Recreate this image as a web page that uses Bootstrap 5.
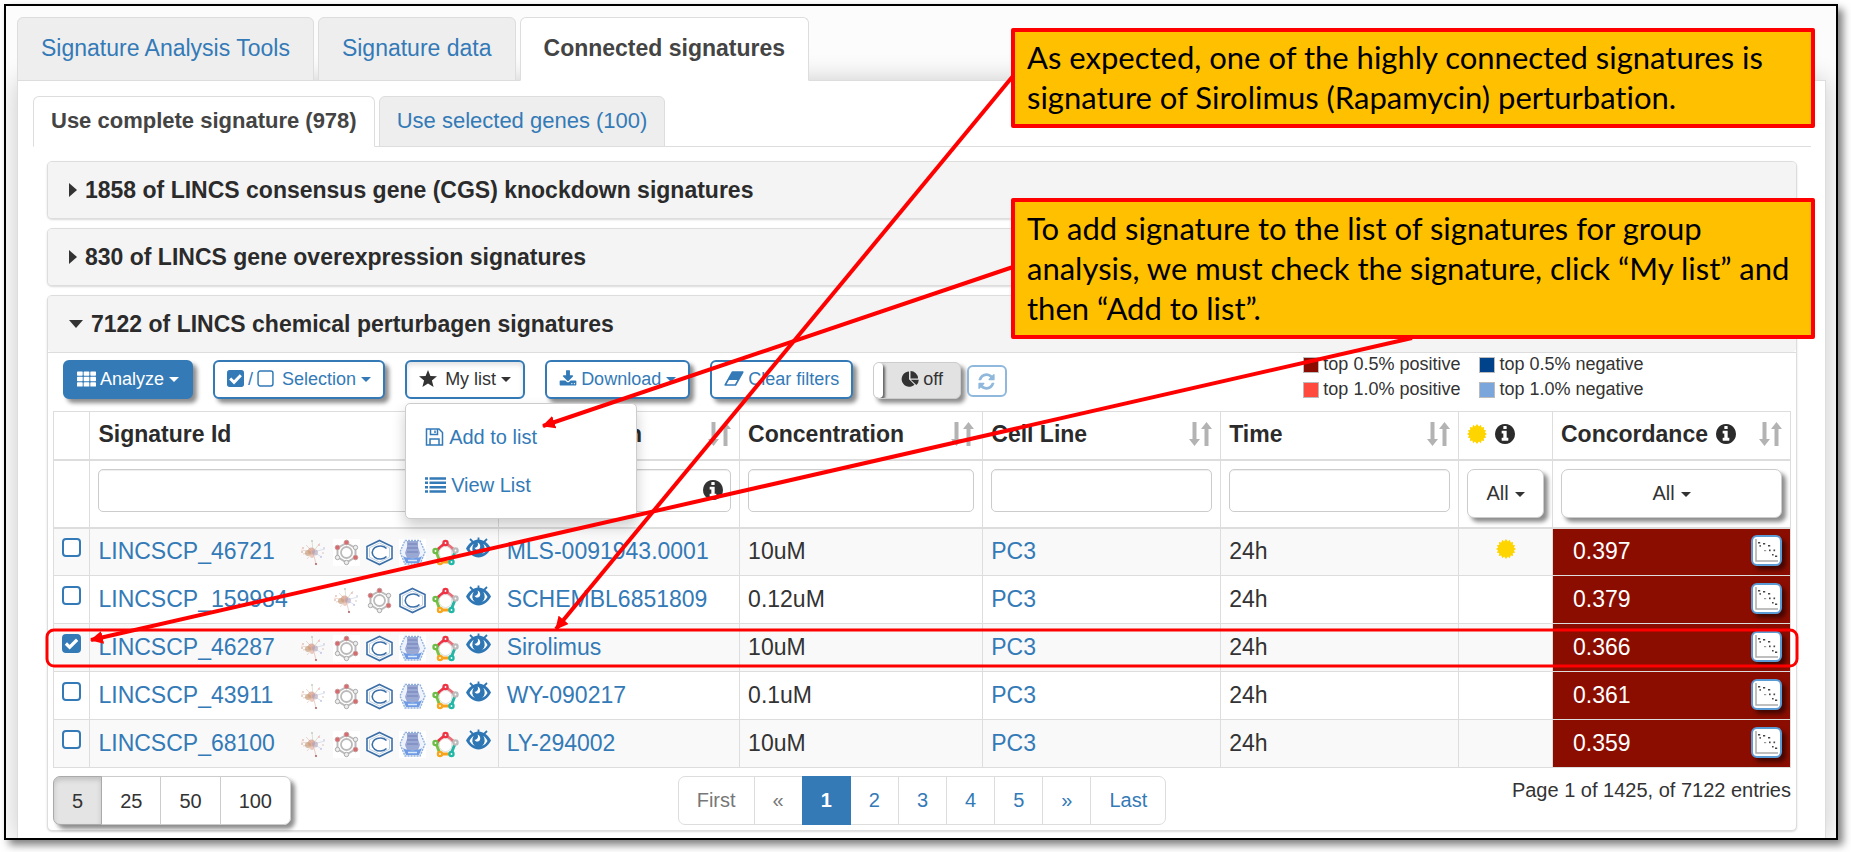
<!DOCTYPE html>
<html lang="en">
<head>
<meta charset="utf-8">
<meta name="viewport" content="width=device-width, initial-scale=1">
<title>Connected signatures</title>
<link href="https://cdn.jsdelivr.net/npm/bootstrap@5.3.0/dist/css/bootstrap.min.css" rel="stylesheet">
<style>
  :root { --blue: #337ab7; --line: #ddd; }
  body { font-family: "Liberation Sans", Arial, sans-serif; font-size: 23px; line-height: 32px; color: #333; background: #fff; }
  a { color: var(--blue); text-decoration: none; }
  .slide-wrap { padding: 4px 13px 13px 4px; }
  .slide { border: 2px solid #000; box-shadow: 5px 5px 8px rgba(0,0,0,.5); background: #fcfcfc; padding: 11px 10px 0 11px; overflow: hidden; }
  .nav-tabs { border: 0; gap: 4px; }
  .nav-tabs .nav-link { position: relative; z-index: 2; margin: 0; border: 1px solid var(--line); border-radius: 6px 6px 0 0; background: #eee; color: var(--blue); }
  .nav-tabs .nav-link.active { background: #fff; color: #444; font-weight: bold; border-color: var(--line); border-bottom-color: #fff; }
  .tabs-main .nav-link { padding: 14px 23px 16px; }
  .tabs-main .nav-item { margin-bottom: -1px; }
  .tabs-sub { font-size: 22px; line-height: 32px; border-bottom: 1px solid var(--line); }
  .tabs-sub .nav-item { margin-bottom: -1px; }
  .tabs-sub .nav-link { padding: 8px 17px 9px; }
  .sheet { border: 1px solid var(--line); border-bottom: 0; background: #fff; box-shadow: 0 0 24px rgba(0,0,0,.2); padding: 15px 14px 7px 15px; }
  .groups { display: flex; flex-direction: column; gap: 9px; padding: 14px 14px 0; }
  .group-box { border: 1px solid var(--line); border-radius: 5px; background: #fff; box-shadow: 0 1px 2px rgba(0,0,0,.15); }
  .group-head { display: flex; align-items: center; width: 100%; gap: 8px; height: 56px; padding: 0 21px 1px; border: 0; border-radius: 4px; background: #f4f4f4; font-weight: bold; color: #2b2b2b; text-align: left; }
  .tri-r { border: 7px solid transparent; border-left: 8px solid #333; border-right: 0; }
  .tri-d { border: 7px solid transparent; border-top: 8px solid #333; border-bottom: 0; }
  .group-body { border-top: 1px solid var(--line); padding: 7px 5px 5px; }
  .tools { gap: 20px; padding: 0 10px 12px; align-items: flex-start; }
  .tools .btn { font-size: 18px; line-height: 24px; padding: 5px 12px 7px; border: 2px solid var(--blue); border-radius: 6px; color: var(--blue); background: #fff; display: flex; align-items: center; gap: 4px; height: 39px; }
  .tools .dropdown-toggle::after { margin: 2px 0 0 1px; }
  .lift { box-shadow: 4px 4px 4px rgba(0,0,0,.45); }
  .tools .btn.solid { background: var(--blue); color: #fff; }
  .tools .btn.opened { color: #333; box-shadow: inset 0 3px 5px rgba(0,0,0,.12); }
  .tools .toggle { border: 1px solid #ccc; background: #e2e2e2; color: #333; padding: 0 17px 4px 0; height: 37px; margin-top: 2px; overflow: hidden; }
  .toggle .knob { align-self: stretch; width: 9px; margin: 0 14px -4px 0; background: #fff; border-radius: 4px; box-shadow: 2px 2px 3px rgba(0,0,0,.6); }
  .tools .btn.refresh { padding: 0; width: 40px; height: 32px; margin: 5px 0 0 -14px; justify-content: center; border-color: #8fb8dc; color: #8fb8dc; }
  .dropdown-menu { width: 232px; margin: 4px 0 0; padding: 9px 0; border: 1px solid #ccc; border-radius: 5px; box-shadow: 0 7px 14px rgba(0,0,0,.2); }
  .dropdown-menu .dropdown-item { display: flex; align-items: center; gap: 5px; font-size: 20px; line-height: 32px; padding: 8px 19px; color: var(--blue); }
  .legend-key { display: grid; grid-template-columns: auto auto; column-gap: 19px; font-size: 18px; line-height: 25px; margin: -8px 8% 0 auto; height: 40px; }
  .legend-key span { display: flex; align-items: center; gap: 4px; }
  .legend-key i { width: 16px; height: 16px; border: 1px solid #bbb; }
  .k1 { background: #8b0b00; } .k2 { background: #00438a; } .k3 { background: #ff4a3d; } .k4 { background: #7ba6dc; }
  .sig-table { width: 100%; table-layout: fixed; border-collapse: collapse; margin: 0; line-height: 28px; }
  .sig-table th, .sig-table td { border: 1px solid var(--line); padding: 0 8px; height: 48px; vertical-align: middle; }
  .sig-table thead tr:first-child th { border-bottom-width: 2px; color: #2b2b2b; padding-bottom: 2px; }
  .sig-table thead tr:last-child td { height: 68px; border-bottom-width: 2px; vertical-align: top; padding-top: 8px; }
  .sig-table tbody td { padding-bottom: 2px; }
  .sig-table tbody tr:nth-child(odd) { background: #f9f9f9; }
  .c-check { width: 2.1%; } .c-id { width: 23.5%; } .c-name { width: 13.9%; } .c-conc { width: 14%; } .c-mid { width: 13.7%; } .c-sun { width: 5.4%; }
  .sig-table .form-control { height: 43px; border: 1px solid #ccc; border-radius: 5px; box-shadow: inset 0 1px 1px rgba(0,0,0,.07); font-size: 20px; }
  .btn-plain { background: #fff; border: 1px solid #ccc; border-radius: 7px; height: 49px; font-size: 20px; color: #333; padding: 0 12px; }
  .btn-plain.pick { width: 100%; display: flex; align-items: center; justify-content: center; }
  .pick::after { margin: 2px 0 0 6px; border-width: 5px; border-bottom-width: 0; }
  .tick { appearance: none; display: block; width: 19px; height: 19px; margin: 0 auto 7px; border: 2px solid var(--blue); border-radius: 4px; background: #fff center / 15px no-repeat; }
  .tick:checked { background-color: var(--blue); background-image: url("data:image/svg+xml,%3Csvg xmlns='http://www.w3.org/2000/svg' viewBox='0 0 16 16'%3E%3Cpath d='M2 8l4 4 8-8' fill='none' stroke='%23fff' stroke-width='3.4'/%3E%3C/svg%3E"); }
  .sig-table td.id-cell { padding-right: 6px; }
  .marks { display: flex; gap: 6px; padding-top: 3px; }
  .marks svg { width: 27px; height: 27px; }
  .marks .eye { margin-top: -4px; }
  .sig-table td.score { background: #8b0d00; color: #fff; padding-left: 20px; }
  .plot { width: 31px; height: 31px; padding: 0; border: 2px solid #5b9bd5; border-radius: 6px; background: #fff; box-shadow: 4px 4px 4px rgba(0,0,0,.5); display: flex; }
  .foot { display: grid; grid-template-columns: 1fr auto 1fr; font-size: 20px; line-height: 28px; padding-top: 8px; }
  .sizes .btn { padding: 0 18px; border-radius: 7px; }
  .sizes .btn.active { background: #e4e4e4; color: #333; border-color: #aaa; box-shadow: inset 0 3px 5px rgba(0,0,0,.15); }
  .pagination { margin: 0; --bs-pagination-font-size: 20px; }
  .page-link { height: 49px; line-height: 47px; padding: 0 18px; color: var(--blue); border-color: var(--line); font-size: 20px; }
  .page-item:first-child .page-link { border-radius: 7px 0 0 7px; } .page-item:last-child .page-link { border-radius: 0 7px 7px 0; }
  .page-item.active .page-link { background: var(--blue); border-color: var(--blue); }
  .page-item.disabled .page-link { color: #777; background: #fff; border-color: var(--line); }
  /* annotations lying over the page */
  .overlay { position: absolute; left: 0; top: 0; z-index: 1100; pointer-events: none; }
  .callout-note { position: absolute; left: 1011px; width: 804px; z-index: 1101; margin: 0; border: 4px solid #f00; border-radius: 2px; background: #ffc000; color: #000; font-family: Lato, "Open Sans", sans-serif; font-size: 31px; font-variant-ligatures: none; line-height: 40px; padding: 5px 0 7px 12px; white-space: nowrap; }
  .note-a { top: 28px; } .note-b { top: 198px; padding: 6px 0 7px 12px; }
</style>
</head>
<body>
<svg width="0" height="0" class="position-absolute" aria-hidden="true">
  <symbol id="grid9" viewBox="0 0 20 16"><g fill="currentColor"><rect width="6" height="4.6" rx=".7"/><rect x="7" width="6" height="4.6" rx=".7"/><rect x="14" width="6" height="4.6" rx=".7"/><rect y="5.7" width="6" height="4.6" rx=".7"/><rect x="7" y="5.7" width="6" height="4.6" rx=".7"/><rect x="14" y="5.7" width="6" height="4.6" rx=".7"/><rect y="11.4" width="6" height="4.6" rx=".7"/><rect x="7" y="11.4" width="6" height="4.6" rx=".7"/><rect x="14" y="11.4" width="6" height="4.6" rx=".7"/></g></symbol>
  <symbol id="boxon" viewBox="0 0 16 16"><rect width="16" height="16" rx="2.5" fill="currentColor"/><path d="M3 8l3.6 3.6L13 5" fill="none" stroke="#fff" stroke-width="2.8"/></symbol>
  <symbol id="boxoff" viewBox="0 0 16 16"><rect x="1" y="1" width="14" height="14" rx="2" fill="none" stroke="currentColor" stroke-width="1.4"/></symbol>
  <symbol id="star" viewBox="0 0 18 17"><path d="M9 0l2.4 5.9 6.6.4-5.1 4.2 1.7 6.5L9 13.4 3.4 17l1.7-6.5L0 6.3l6.6-.4z" fill="currentColor"/></symbol>
  <symbol id="download" viewBox="0 0 1792 1664"><path fill="currentColor" d="M1344 1344q0-26-19-45t-45-19-45 19-19 45 19 45 45 19 45-19 19-45zm256 0q0-26-19-45t-45-19-45 19-19 45 19 45 45 19 45-19 19-45zm128-224v320q0 40-28 68t-68 28h-1472q-40 0-68-28t-28-68v-320q0-40 28-68t68-28h465l135 136q58 56 136 56t136-56l136-136h464q40 0 68 28t28 68zm-325-569q17 41-14 70l-448 448q-18 19-45 19t-45-19l-448-448q-31-29-14-70 17-39 59-39h256v-448q0-26 19-45t45-19h256q26 0 45 19t19 45v448h256q42 0 59 39z"/></symbol>
  <symbol id="eraser" viewBox="0 0 20 15"><path d="M8.5 1h10.3L11.5 14H1.2z" fill="none" stroke="currentColor" stroke-width="1.6" stroke-linejoin="round"/><path d="M8.5 1h10.3l-4.5 8H4z" fill="currentColor"/></symbol>
  <symbol id="pie" viewBox="0 0 18 16"><path fill="currentColor" d="M8 8.2l5.5 5.6A7.7 7.7 0 1 1 8 .4zM9.500 0a7.700 7.700 0 0 1 7.600 7.400H9.500zM9.800 8.700h8a7.700 7.700 0 0 1-2.400 5.400z"/></symbol>
  <symbol id="refresh" viewBox="0 0 1792 1792"><path fill="currentColor" d="M1639 1056q0 5-1 7-64 268-268 434.500t-478 166.500q-146 0-282.500-55t-243.500-157l-129 129q-19 19-45 19t-45-19-19-45v-448q0-26 19-45t45-19h448q26 0 45 19t19 45-19 45l-137 137q71 66 161 102t187 36q134 0 250-65t186-179q11-17 53-117 8-23 30-23h192q13 0 22.500 9.500t9.500 22.500zm25-800v448q0 26-19 45t-45 19h-448q-26 0-45-19t-19-45 19-45l138-138q-148-137-349-137-134 0-250 65t-186 179q-11 17-53 117-8 23-30 23h-199q-13 0-22.500-9.500t-9.500-22.500v-7q65-268 270-434.500t480-166.500q146 0 284 55.500t245 156.500l130-129q19-19 45-19t45 19 19 45z"/></symbol>
  <symbol id="floppy" viewBox="0 0 18 18"><path d="M1 1h12.500L17 4.500V17H1zM4.500 17v-6h9v6M5 1v5.500h7V1M9.500 2.500v2.500" fill="none" stroke="currentColor" stroke-width="1.500"/></symbol>
  <symbol id="rows" viewBox="0 0 21 16"><path d="M0 1.500h3M0 5.800h3M0 10.200h3M0 14.500h3M4.500 1.500H21M4.500 5.800H21M4.500 10.200H21M4.500 14.500H21" stroke="currentColor" stroke-width="2.600"/></symbol>
  <symbol id="info" viewBox="128 128 1536 1536"><path fill="currentColor" d="M1152 1376v-160q0-14-9-23t-23-9h-96v-512q0-14-9-23t-23-9h-320q-14 0-23 9t-9 23v160q0 14 9 23t23 9h96v320h-96q-14 0-23 9t-9 23v160q0 14 9 23t23 9h448q14 0 23-9t9-23zm-128-896v-160q0-14-9-23t-23-9h-192q-14 0-23 9t-9 23v160q0 14 9 23t23 9h192q14 0 23-9t9-23zm640 416q0 209-103 385.500t-279.500 279.500-385.500 103-385.500-103-279.500-279.500-103-385.500 103-385.500 279.500-279.500 385.500-103 385.500 103 279.500 279.500 103 385.500z"/></symbol>
  <symbol id="sun" viewBox="-10 -10 20 20"><path fill="#ffd500" d="M0-10L1.900-7.600 3.800-9.200 4.700-6.400 7.100-7.100 6.800-4.100 9.200-3.800 7.900-1.600 10 0 7.900 1.600 9.200 3.800 6.800 4.100 7.100 7.100 4.700 6.400 3.800 9.200 1.900 7.600 0 10-1.900 7.600-3.800 9.200-4.700 6.400-7.100 7.100-6.800 4.100-9.200 3.800-7.900 1.600-10 0-7.900-1.600-9.200-3.800-6.800-4.100-7.100-7.100-4.700-6.400-3.800-9.200-1.900-7.600z"/></symbol>
  <symbol id="sort" viewBox="0 0 23 24"><path fill="#b3b3b3" d="M3.500 0h4v17H11l-5.500 7L0 17h3.500zM15.500 24h4V7H23l-5.500-7L12 7h3.500z"/></symbol>
  <symbol id="net" viewBox="0 0 27 27"><g fill="none" stroke-width=".7" opacity=".55"><path d="M13 13L1 11M13 13L7 20" stroke="#d9a58c"/><path d="M13 13L12 1M13 13L20 4" stroke="#a9b897"/><path d="M13 13l12-3M13 13l9 5" stroke="#a9b8dc"/><path d="M13 13l3 12M13 13L3 15" stroke="#cf8a80"/><path d="M13 13L6 6" stroke="#bca58c"/></g><g fill="#d99a87"><circle cx="11.500" cy="12" r="3.600" opacity=".7"/><circle cx="8" cy="14" r="3" fill="#c8a07c" opacity=".7"/><circle cx="15" cy="13.500" r="3" fill="#b3a4b8" opacity=".6"/><circle cx="12" cy="17" r="2" opacity=".5"/><circle cx="16" cy="25" r="1.100" fill="#a66"/><circle cx="2" cy="13" r=".8"/><circle cx="3" cy="9" r=".8"/><circle cx="19" cy="6" r=".8" fill="#e99"/><circle cx="24" cy="9" r=".8" fill="#bbd"/><circle cx="21" cy="18" r=".8" fill="#aad"/><circle cx="23" cy="14" r=".8" fill="#dbb"/><circle cx="12" cy="2" r=".8" fill="#aba"/></g></symbol>
  <symbol id="ring" viewBox="0 0 27 27"><rect width="27" height="27" fill="#fff"/><path d="M13.500 4L22.500 9v9l-9 5.500L4.500 18V9z" fill="none" stroke="#bbb" stroke-width="2"/><circle cx="13.500" cy="13.500" r="5.500" fill="#fff" stroke="#bbb" stroke-width="1.800"/><g fill="#eee" stroke="#aaa"><circle cx="22.500" cy="8.500" r="2.200"/><circle cx="13.500" cy="23.500" r="2.200"/><circle cx="4.500" cy="18.500" r="2.200"/></g><g fill="#d66b70" stroke="#c99"><circle cx="13.500" cy="3.500" r="2.300"/><circle cx="4.500" cy="8.500" r="2.300"/><circle cx="22.500" cy="18.500" r="2.300"/></g></symbol>
  <symbol id="hexa" viewBox="0 0 27 27"><g fill="none" stroke="#3c6fa8" stroke-width="1.600"><path d="M13.500 1.500L26 7.500v12l-12.500 6L1 19.500v-12z" fill="#fff"/><path d="M13.500 4L23.500 8.800v9.400L13.500 23 3.500 18.200V8.800z" stroke-width=".6" opacity=".5"/><path d="M20.500 9.500a8 6.500 0 1 0 0 8" /></g></symbol>
  <symbol id="hive" viewBox="0 0 27 27"><rect width="27" height="27" fill="#fff"/><path d="M6 1.500h15l5 11.500-5 12H6L1 13z" fill="#eef3fb" stroke="#8fb0dc" stroke-width="1.400" stroke-dasharray="2 1"/><path d="M8 2h11v6l2 6-2 5H8l-2-5 2-6z" fill="#9aa8d4"/><path d="M9 5h9M8 9h11M8 13h11" stroke="#7f8cc0" stroke-width="1.500"/><path d="M4 17c4 3 15 3 19 0l-3 7H7z" fill="#6f9be3"/><path d="M9 21.500h9" stroke="#dbe7fa" stroke-width="1.500"/></symbol>
  <symbol id="penta" viewBox="0 0 27 27"><g fill="none" stroke-width="3"><path d="M13.500 4L4 12" stroke="#ee3344"/><path d="M13.500 4l9.500 7.500" stroke="#e8707a"/><path d="M4 12l4 11" stroke="#7bc143"/><path d="M8 23h11" stroke="#f6a21c"/><path d="M19 23l4.500-11.500" stroke="#26b5a4"/></g><circle cx="13.500" cy="14" r="6.500" fill="#fff" stroke="#ddd"/><circle cx="13.500" cy="4" r="3.200" fill="#ee3344"/><circle cx="3.500" cy="12" r="3.200" fill="#6cbd45"/><circle cx="23.500" cy="11.500" r="3.200" fill="#bbb"/><circle cx="8" cy="23" r="3.200" fill="#f7a51c"/><circle cx="19.500" cy="23" r="3.200" fill="#1fb8a6"/><g fill="#fff"><circle cx="13.500" cy="4" r=".9"/><circle cx="3.500" cy="12" r=".9"/><circle cx="23.500" cy="11.500" r=".9"/><circle cx="8" cy="23" r=".9"/><circle cx="19.500" cy="23" r=".9"/></g></symbol>
  <symbol id="eye" viewBox="0 0 27 27"><path d="M1 13.500C4 8 8.500 4.500 13.500 4.500S23 8 26 13.500C23 19 18.500 22.500 13.500 22.500S4 19 1 13.500z" fill="#2f76b5"/><path d="M5 4l3 3M13.500 2.500v3M22 4l-3 3" stroke="#2f76b5" stroke-width="1.800"/><path d="M4.500 14C5.700 11.500 7 10 8.700 9a7 7 0 0 0 1.200 9.800C7.500 18 5.700 16.300 4.500 14zM22.500 14c-1.200-2.500-2.500-4-4.200-5a7 7 0 0 1-1.200 9.800c2.400-.8 4.200-2.500 5.400-4.800z" fill="#fff"/><path d="M12.500 7.500c1.500 2.500-.3 5.500-3 5.300.8 2.200 4 2.300 5.300.4 1.100-1.800.3-4.700-2.300-5.700z" fill="#fff"/></symbol>
  <symbol id="scatter" viewBox="0 0 27 27"><path d="M3 2v22h22" fill="none" stroke="#aaa" stroke-width="1.500"/><g fill="#444"><rect x="5" y="5" width="2.200" height="1.500"/><rect x="6.500" y="8" width="1.300" height="1.800"/><rect x="10" y="6" width="2.200" height="1.500"/><rect x="15" y="8" width="2.200" height="1.500"/><rect x="11" y="13" width="2.200" height="1.200" fill="#999"/><rect x="16" y="12.500" width="1.600" height="1.700"/><rect x="20.500" y="12.500" width="1.600" height="1.700"/><rect x="19" y="17" width="1.600" height="1.500"/><rect x="22" y="18.500" width="2.200" height="1.500"/></g></symbol>
</svg>

<div class="slide-wrap position-relative">
  <main class="slide">
    <ul class="nav nav-tabs tabs-main">
      <li class="nav-item"><a class="nav-link" href="#">Signature Analysis Tools</a></li>
      <li class="nav-item"><a class="nav-link" href="#">Signature data</a></li>
      <li class="nav-item"><a class="nav-link active" href="#" aria-current="page">Connected signatures</a></li>
    </ul>
    <div class="sheet">
      <ul class="nav nav-tabs tabs-sub">
        <li class="nav-item"><a class="nav-link active" href="#">Use complete signature (978)</a></li>
        <li class="nav-item"><a class="nav-link" href="#">Use selected genes (100)</a></li>
      </ul>
      <div class="groups">
        <section class="group-box"><button class="group-head" type="button"><i class="tri-r"></i>1858 of LINCS consensus gene (CGS) knockdown signatures</button></section>
        <section class="group-box"><button class="group-head" type="button"><i class="tri-r"></i>830 of LINCS gene overexpression signatures</button></section>
        <section class="group-box">
          <button class="group-head" type="button"><i class="tri-d"></i>7122 of LINCS chemical perturbagen signatures</button>
          <div class="group-body">
            <div class="tools d-flex">
              <button type="button" class="btn solid lift dropdown-toggle"><svg width="19" height="16"><use href="#grid9"/></svg>Analyze</button>
              <button type="button" class="btn lift dropdown-toggle"><svg width="17" height="17"><use href="#boxon"/></svg>/<svg class="me-1" width="17" height="17"><use href="#boxoff"/></svg>Selection</button>
              <div class="dropdown">
                <button type="button" class="btn opened dropdown-toggle" aria-expanded="true"><svg class="me-1" width="18" height="17"><use href="#star"/></svg>My list</button>
                <ul class="dropdown-menu show">
                  <li><a class="dropdown-item" href="#"><svg width="19" height="18"><use href="#floppy"/></svg>Add to list</a></li>
                  <li><a class="dropdown-item" href="#"><svg width="21" height="16"><use href="#rows"/></svg>View List</a></li>
                </ul>
              </div>
              <button type="button" class="btn lift dropdown-toggle"><svg width="18" height="17"><use href="#download"/></svg>Download</button>
              <button type="button" class="btn lift"><svg width="20" height="15"><use href="#eraser"/></svg>Clear filters</button>
              <button type="button" class="btn toggle lift"><span class="knob"></span><svg width="18" height="16"><use href="#pie"/></svg>off</button>
              <button type="button" class="btn refresh" aria-label="Refresh"><svg width="19" height="19"><use href="#refresh"/></svg></button>
              <div class="legend-key">
                <span><i class="k1"></i>top 0.5% positive</span><span><i class="k2"></i>top 0.5% negative</span>
                <span><i class="k3"></i>top 1.0% positive</span><span><i class="k4"></i>top 1.0% negative</span>
              </div>
            </div>
            <table class="sig-table">
              <colgroup><col class="c-check"><col class="c-id"><col class="c-name"><col class="c-conc"><col class="c-mid"><col class="c-mid"><col class="c-sun"><col></colgroup>
              <thead>
                <tr>
                  <th></th>
                  <th>Signature Id</th>
                  <th><div class="d-flex align-items-center justify-content-between">Perturbagen<svg width="23" height="24"><use href="#sort"/></svg></div></th>
                  <th><div class="d-flex align-items-center justify-content-between">Concentration<svg width="23" height="24"><use href="#sort"/></svg></div></th>
                  <th><div class="d-flex align-items-center justify-content-between">Cell Line<svg width="23" height="24"><use href="#sort"/></svg></div></th>
                  <th><div class="d-flex align-items-center justify-content-between">Time<svg width="23" height="24"><use href="#sort"/></svg></div></th>
                  <th><div class="d-flex align-items-center gap-2"><svg width="20" height="20"><use href="#sun"/></svg><svg width="20" height="20"><use href="#info"/></svg></div></th>
                  <th><div class="d-flex align-items-center gap-2">Concordance<svg width="20" height="20"><use href="#info"/></svg><svg class="ms-auto" width="23" height="24"><use href="#sort"/></svg></div></th>
                </tr>
                <tr>
                  <td></td>
                  <td><input class="form-control" type="text" aria-label="Filter by signature id"></td>
                  <td><div class="position-relative"><input class="form-control" type="text" aria-label="Filter by perturbagen"><svg class="position-absolute top-50 end-0 translate-middle-y me-2" width="20" height="20"><use href="#info"/></svg></div></td>
                  <td><input class="form-control" type="text" aria-label="Filter by concentration"></td>
                  <td><input class="form-control" type="text" aria-label="Filter by cell line"></td>
                  <td><input class="form-control" type="text" aria-label="Filter by time"></td>
                  <td><button type="button" class="btn btn-plain pick lift dropdown-toggle">All</button></td>
                  <td><button type="button" class="btn btn-plain pick lift dropdown-toggle">All</button></td>
                </tr>
              </thead>
              <tbody>
                <tr>
                  <td><input class="tick" type="checkbox" aria-label="Select LINCSCP_46721"></td>
                  <td class="id-cell"><div class="d-flex align-items-center justify-content-between"><a href="#">LINCSCP_46721</a><span class="marks"><svg><use href="#net"/></svg><svg><use href="#ring"/></svg><svg><use href="#hexa"/></svg><svg><use href="#hive"/></svg><svg><use href="#penta"/></svg><svg class="eye"><use href="#eye"/></svg></span></div></td>
                  <td><a href="#">MLS-0091943.0001</a></td><td>10uM</td><td><a href="#">PC3</a></td><td>24h</td>
                  <td><svg class="d-block mx-auto mb-1" width="20" height="20"><use href="#sun"/></svg></td>
                  <td class="score"><div class="d-flex align-items-center justify-content-between">0.397<button type="button" class="plot" aria-label="Scatter plot"><svg width="27" height="27"><use href="#scatter"/></svg></button></div></td>
                </tr>
                <tr>
                  <td><input class="tick" type="checkbox" aria-label="Select LINCSCP_159984"></td>
                  <td class="id-cell"><div class="d-flex align-items-center justify-content-between"><a href="#">LINCSCP_159984</a><span class="marks"><svg><use href="#net"/></svg><svg><use href="#ring"/></svg><svg><use href="#hexa"/></svg><svg><use href="#penta"/></svg><svg class="eye"><use href="#eye"/></svg></span></div></td>
                  <td><a href="#">SCHEMBL6851809</a></td><td>0.12uM</td><td><a href="#">PC3</a></td><td>24h</td>
                  <td></td>
                  <td class="score"><div class="d-flex align-items-center justify-content-between">0.379<button type="button" class="plot" aria-label="Scatter plot"><svg width="27" height="27"><use href="#scatter"/></svg></button></div></td>
                </tr>
                <tr>
                  <td><input class="tick" type="checkbox" checked aria-label="Select LINCSCP_46287"></td>
                  <td class="id-cell"><div class="d-flex align-items-center justify-content-between"><a href="#">LINCSCP_46287</a><span class="marks"><svg><use href="#net"/></svg><svg><use href="#ring"/></svg><svg><use href="#hexa"/></svg><svg><use href="#hive"/></svg><svg><use href="#penta"/></svg><svg class="eye"><use href="#eye"/></svg></span></div></td>
                  <td><a href="#">Sirolimus</a></td><td>10uM</td><td><a href="#">PC3</a></td><td>24h</td>
                  <td></td>
                  <td class="score"><div class="d-flex align-items-center justify-content-between">0.366<button type="button" class="plot" aria-label="Scatter plot"><svg width="27" height="27"><use href="#scatter"/></svg></button></div></td>
                </tr>
                <tr>
                  <td><input class="tick" type="checkbox" aria-label="Select LINCSCP_43911"></td>
                  <td class="id-cell"><div class="d-flex align-items-center justify-content-between"><a href="#">LINCSCP_43911</a><span class="marks"><svg><use href="#net"/></svg><svg><use href="#ring"/></svg><svg><use href="#hexa"/></svg><svg><use href="#hive"/></svg><svg><use href="#penta"/></svg><svg class="eye"><use href="#eye"/></svg></span></div></td>
                  <td><a href="#">WY-090217</a></td><td>0.1uM</td><td><a href="#">PC3</a></td><td>24h</td>
                  <td></td>
                  <td class="score"><div class="d-flex align-items-center justify-content-between">0.361<button type="button" class="plot" aria-label="Scatter plot"><svg width="27" height="27"><use href="#scatter"/></svg></button></div></td>
                </tr>
                <tr>
                  <td><input class="tick" type="checkbox" aria-label="Select LINCSCP_68100"></td>
                  <td class="id-cell"><div class="d-flex align-items-center justify-content-between"><a href="#">LINCSCP_68100</a><span class="marks"><svg><use href="#net"/></svg><svg><use href="#ring"/></svg><svg><use href="#hexa"/></svg><svg><use href="#hive"/></svg><svg><use href="#penta"/></svg><svg class="eye"><use href="#eye"/></svg></span></div></td>
                  <td><a href="#">LY-294002</a></td><td>10uM</td><td><a href="#">PC3</a></td><td>24h</td>
                  <td></td>
                  <td class="score"><div class="d-flex align-items-center justify-content-between">0.359<button type="button" class="plot" aria-label="Scatter plot"><svg width="27" height="27"><use href="#scatter"/></svg></button></div></td>
                </tr>
              </tbody>
            </table>
            <div class="foot">
              <div><div class="btn-group sizes lift rounded-3" role="group" aria-label="Entries per page">
                <button type="button" class="btn btn-plain active">5</button><button type="button" class="btn btn-plain">25</button><button type="button" class="btn btn-plain">50</button><button type="button" class="btn btn-plain">100</button>
              </div></div>
              <ul class="pagination">
                <li class="page-item disabled"><a class="page-link" href="#">First</a></li>
                <li class="page-item disabled"><a class="page-link" href="#">«</a></li>
                <li class="page-item active"><a class="page-link fw-bold" href="#">1</a></li>
                <li class="page-item"><a class="page-link" href="#">2</a></li>
                <li class="page-item"><a class="page-link" href="#">3</a></li>
                <li class="page-item"><a class="page-link" href="#">4</a></li>
                <li class="page-item"><a class="page-link" href="#">5</a></li>
                <li class="page-item"><a class="page-link" href="#">»</a></li>
                <li class="page-item"><a class="page-link" href="#">Last</a></li>
              </ul>
              <div class="text-end">Page 1 of 1425, of 7122 entries</div>
            </div>
          </div>
        </section>
      </div>
    </div>
  </main>

  <svg class="overlay" width="1851" height="852" viewBox="0 0 1851 852" fill="none" stroke="#f00" stroke-width="4" aria-hidden="true">
    <defs><marker id="tip" viewBox="0 0 12 12" refX="11" refY="6" markerWidth="13" markerHeight="13" markerUnits="userSpaceOnUse" orient="auto"><path d="M0 0l12 6-12 6z" fill="#f00" stroke="none"/></marker></defs>
    <rect x="47" y="630" width="1750" height="36" rx="7" stroke-width="3"/>
    <path d="M1013 76L556 629" marker-end="url(#tip)"/>
    <path d="M1013 267L543 426" marker-end="url(#tip)"/>
    <path d="M1412 338L91 640" marker-end="url(#tip)"/>
  </svg>
  <p class="callout-note note-a">As expected, one of the highly connected signatures is<br>signature of Sirolimus (Rapamycin) perturbation.</p>
  <p class="callout-note note-b">To add signature to the list of signatures for group<br>analysis, we must check the signature, click “My list” and<br>then “Add to list”.</p>
</div>
<script src="https://cdn.jsdelivr.net/npm/bootstrap@5.3.0/dist/js/bootstrap.bundle.min.js"></script>
</body>
</html>
